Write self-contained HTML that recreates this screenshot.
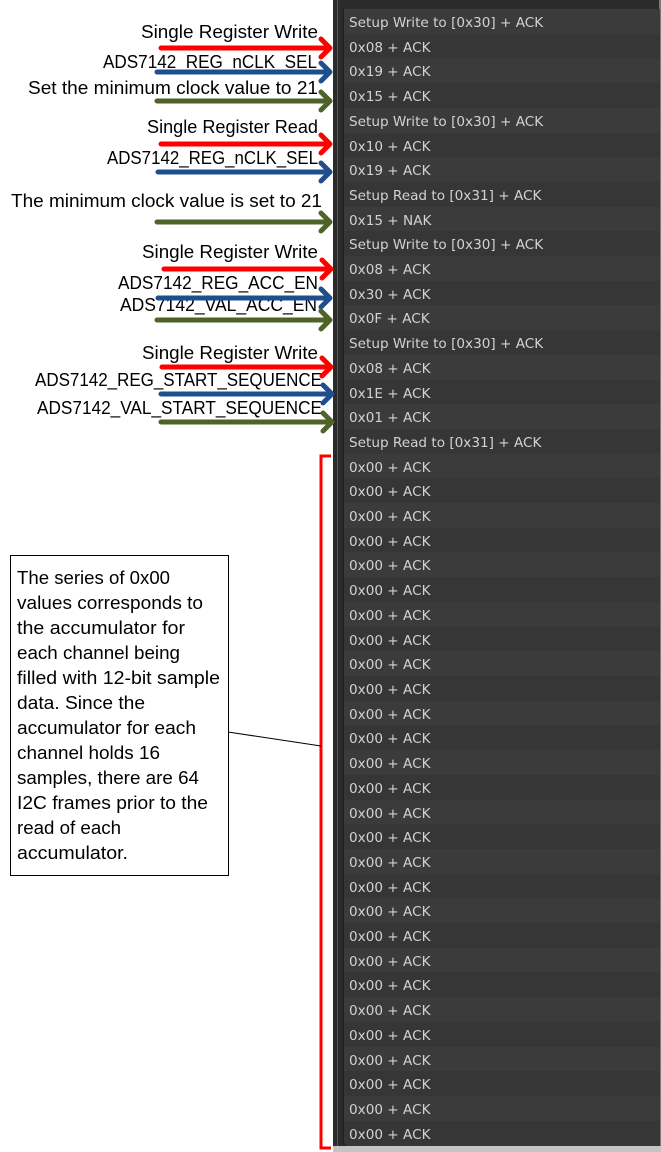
<!DOCTYPE html>
<html><head><meta charset="utf-8"><style>
html,body{margin:0;padding:0;background:#fff;width:661px;height:1152px;overflow:hidden;position:relative}
#outer{position:absolute;left:333px;top:0;width:328px;height:1146px;background:#2b2b2b}
#lline{position:absolute;left:337px;top:0;width:1px;height:1146px;background:#575757}
#bot{position:absolute;left:333px;top:1146px;width:328px;height:6px;background:#c4c4c4}
#rline{position:absolute;left:659px;top:0;width:2px;height:1146px;background:#7a7a7a}
#panel{position:absolute;left:343px;top:9px;width:316px;height:1137px;background:#383838;border-left:1px solid #1e1e1e;border-bottom-left-radius:5px;overflow:hidden}
.r{height:24.71px;line-height:28px;padding-left:5px;box-sizing:border-box;font-family:"DejaVu Sans","Liberation Sans",sans-serif;font-size:13.6px;color:#d2d2d2;white-space:nowrap;overflow:hidden}
.r:nth-child(odd){background:#3b3b3b}
.r:nth-child(even){background:#363636}
svg{position:absolute;left:0;top:0}
</style></head><body>
<div id="outer"></div><div id="lline"></div><div id="rline"></div><div id="bot"></div>
<div id="panel">
<div class="r">Setup Write to [0x30] + ACK</div>
<div class="r">0x08 + ACK</div>
<div class="r">0x19 + ACK</div>
<div class="r">0x15 + ACK</div>
<div class="r">Setup Write to [0x30] + ACK</div>
<div class="r">0x10 + ACK</div>
<div class="r">0x19 + ACK</div>
<div class="r">Setup Read to [0x31] + ACK</div>
<div class="r">0x15 + NAK</div>
<div class="r">Setup Write to [0x30] + ACK</div>
<div class="r">0x08 + ACK</div>
<div class="r">0x30 + ACK</div>
<div class="r">0x0F + ACK</div>
<div class="r">Setup Write to [0x30] + ACK</div>
<div class="r">0x08 + ACK</div>
<div class="r">0x1E + ACK</div>
<div class="r">0x01 + ACK</div>
<div class="r">Setup Read to [0x31] + ACK</div>
<div class="r">0x00 + ACK</div><div class="r">0x00 + ACK</div><div class="r">0x00 + ACK</div><div class="r">0x00 + ACK</div>
<div class="r">0x00 + ACK</div><div class="r">0x00 + ACK</div><div class="r">0x00 + ACK</div><div class="r">0x00 + ACK</div>
<div class="r">0x00 + ACK</div><div class="r">0x00 + ACK</div><div class="r">0x00 + ACK</div><div class="r">0x00 + ACK</div>
<div class="r">0x00 + ACK</div><div class="r">0x00 + ACK</div><div class="r">0x00 + ACK</div><div class="r">0x00 + ACK</div>
<div class="r">0x00 + ACK</div><div class="r">0x00 + ACK</div><div class="r">0x00 + ACK</div><div class="r">0x00 + ACK</div>
<div class="r">0x00 + ACK</div><div class="r">0x00 + ACK</div><div class="r">0x00 + ACK</div><div class="r">0x00 + ACK</div>
<div class="r">0x00 + ACK</div><div class="r">0x00 + ACK</div><div class="r">0x00 + ACK</div><div class="r">0x00 + ACK</div>
</div>
<svg width="661" height="1152" xmlns="http://www.w3.org/2000/svg">
<g font-family="Liberation Sans, sans-serif" font-size="18" fill="#000" text-anchor="end">
<text x="318" y="38" textLength="177" lengthAdjust="spacingAndGlyphs">Single Register Write</text>
<text x="317" y="68" textLength="214" lengthAdjust="spacingAndGlyphs">ADS7142_REG_nCLK_SEL</text>
<text x="318" y="94" textLength="290" lengthAdjust="spacingAndGlyphs">Set the minimum clock value to 21</text>
<text x="318" y="133" textLength="171" lengthAdjust="spacingAndGlyphs">Single Register Read</text>
<text x="318" y="164" textLength="211" lengthAdjust="spacingAndGlyphs">ADS7142_REG_nCLK_SEL</text>
<text x="322" y="207" textLength="311" lengthAdjust="spacingAndGlyphs">The minimum clock value is set to 21</text>
<text x="318" y="258" textLength="176" lengthAdjust="spacingAndGlyphs">Single Register Write</text>
<text x="318" y="289" textLength="200" lengthAdjust="spacingAndGlyphs">ADS7142_REG_ACC_EN</text>
<text x="317" y="311" textLength="197" lengthAdjust="spacingAndGlyphs">ADS7142_VAL_ACC_EN</text>
<text x="318" y="359" textLength="176" lengthAdjust="spacingAndGlyphs">Single Register Write</text>
<text x="322" y="386" textLength="287" lengthAdjust="spacingAndGlyphs">ADS7142_REG_START_SEQUENCE</text>
<text x="322" y="414" textLength="285" lengthAdjust="spacingAndGlyphs">ADS7142_VAL_START_SEQUENCE</text>
</g>
<g fill="none" stroke-width="5" stroke-linecap="round" stroke-linejoin="round">
<g stroke="#ff0000">
<path d="M161 48H330M321 39L330 48L321 57"/>
<path d="M161 144H330M321 135L330 144L321 153"/>
<path d="M164 269H331M322 260L331 269L322 278"/>
<path d="M162 367H331M322 358L331 367L322 376"/>
</g>
<g stroke="#1f4e8c">
<path d="M157 72H330M321 63L330 72L321 81"/>
<path d="M158 172H330M321 163L330 172L321 181"/>
<path d="M158 298H330M321 289L330 298L321 307"/>
<path d="M161 394H332M323 385L332 394L323 403"/>
</g>
<g stroke="#4f6228">
<path d="M157 101H330M321 92L330 101L321 110"/>
<path d="M157 222H330M321 213L330 222L321 231"/>
<path d="M157 320H330M321 311L330 320L321 329"/>
<path d="M161 422H332M323 413L332 422L323 431"/>
</g>
</g>
<path d="M331 456H321V1148H331" fill="none" stroke="#ff0000" stroke-width="3"/>
<line x1="228" y1="732" x2="321" y2="746" stroke="#000" stroke-width="1"/>
<rect x="10.5" y="555.5" width="218" height="320" fill="#fff" stroke="#000" stroke-width="1"/>
<g font-family="Liberation Sans, sans-serif" font-size="18" fill="#000">
<text x="17" y="584" textLength="153" lengthAdjust="spacingAndGlyphs">The series of 0x00</text>
<text x="17" y="609" textLength="186" lengthAdjust="spacingAndGlyphs">values corresponds to</text>
<text x="17" y="634" textLength="168" lengthAdjust="spacingAndGlyphs">the accumulator for</text>
<text x="17" y="659" textLength="163" lengthAdjust="spacingAndGlyphs">each channel being</text>
<text x="17" y="684" textLength="203" lengthAdjust="spacingAndGlyphs">filled with 12-bit sample</text>
<text x="17" y="709" textLength="128" lengthAdjust="spacingAndGlyphs">data.  Since the</text>
<text x="17" y="734" textLength="179" lengthAdjust="spacingAndGlyphs">accumulator for each</text>
<text x="17" y="759" textLength="143" lengthAdjust="spacingAndGlyphs">channel holds 16</text>
<text x="17" y="784" textLength="182" lengthAdjust="spacingAndGlyphs">samples, there are 64</text>
<text x="17" y="809" textLength="191" lengthAdjust="spacingAndGlyphs">I2C frames prior to the</text>
<text x="17" y="834" textLength="104" lengthAdjust="spacingAndGlyphs">read of each</text>
<text x="17" y="859" textLength="111" lengthAdjust="spacingAndGlyphs">accumulator.</text>
</g>
</svg>
</body></html>
